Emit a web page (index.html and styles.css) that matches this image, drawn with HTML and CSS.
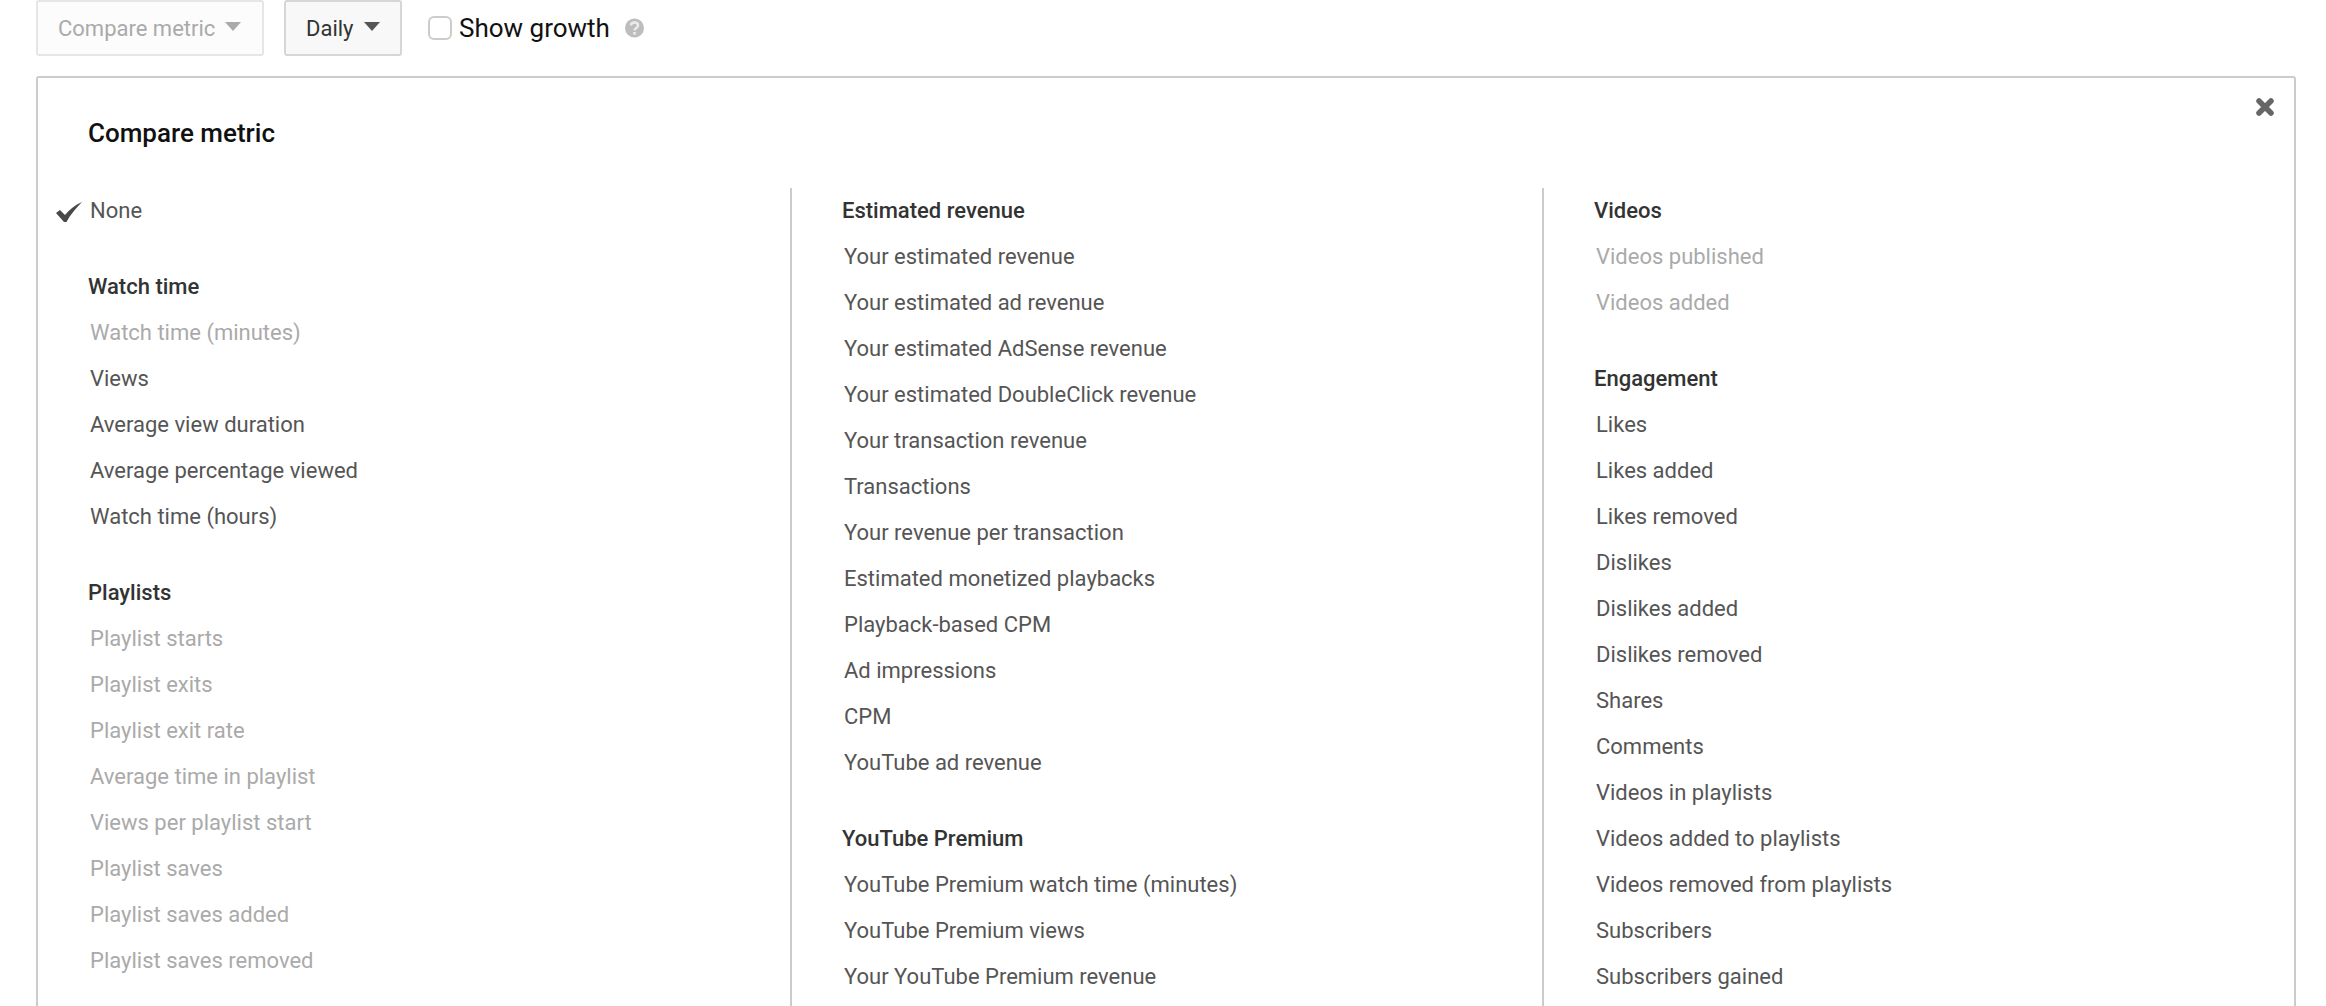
FILE: index.html
```html
<!DOCTYPE html>
<html lang="en">
<head>
<meta charset="utf-8">
<title>Compare metric</title>
<link rel="stylesheet" href="styles.css">
</head>
<body>
<div class="toolbar">
  <button class="btn btn-disabled">Compare metric<span class="caret"></span></button>
  <button class="btn btn-active">Daily<span class="caret"></span></button>
  <label class="growth"><span class="checkbox"></span><span>Show growth</span></label>
  <svg class="help" width="19" height="20" viewBox="0 0 19 20"><circle cx="9.500" cy="10" r="9.500" fill="#bdbdbd"/><path d="M6 7.500 C6 3.500 13 3.500 13 7.500 C13 10 9.500 9.800 9.500 12.500" fill="none" stroke="#ececec" stroke-width="2.400"/><rect x="8.200" y="14" width="2.600" height="2.600" fill="#ececec"/></svg>
</div>
<section class="panel">
  <svg class="close" width="18" height="18" viewBox="0 0 18 18"><path d="M3 3 L15 15 M15 3 L3 15" stroke="#666" stroke-width="5.500" stroke-linecap="round"/></svg>
  <h2 class="title">Compare metric</h2>
  <div class="cols">
    <div class="col">
      <div class="group">
        <div class="item"><svg class="check" width="26" height="20" viewBox="0 0 26 20"><path d="M0 11 L4 8 L9 13 C13 8 19 3 26 0 C20 6 14 13 10.500 20 L8 20 Z" fill="#484848"/></svg>None</div>
      </div>
      <div class="group">
        <h3>Watch time</h3>
        <div class="item off">Watch time (minutes)</div>
        <div class="item">Views</div>
        <div class="item">Average view duration</div>
        <div class="item">Average percentage viewed</div>
        <div class="item">Watch time (hours)</div>
      </div>
      <div class="group">
        <h3>Playlists</h3>
        <div class="item off">Playlist starts</div>
        <div class="item off">Playlist exits</div>
        <div class="item off">Playlist exit rate</div>
        <div class="item off">Average time in playlist</div>
        <div class="item off">Views per playlist start</div>
        <div class="item off">Playlist saves</div>
        <div class="item off">Playlist saves added</div>
        <div class="item off">Playlist saves removed</div>
      </div>
    </div>
    <div class="col">
      <div class="group">
        <h3>Estimated revenue</h3>
        <div class="item">Your estimated revenue</div>
        <div class="item">Your estimated ad revenue</div>
        <div class="item">Your estimated AdSense revenue</div>
        <div class="item">Your estimated DoubleClick revenue</div>
        <div class="item">Your transaction revenue</div>
        <div class="item">Transactions</div>
        <div class="item">Your revenue per transaction</div>
        <div class="item">Estimated monetized playbacks</div>
        <div class="item">Playback-based CPM</div>
        <div class="item">Ad impressions</div>
        <div class="item">CPM</div>
        <div class="item">YouTube ad revenue</div>
      </div>
      <div class="group">
        <h3>YouTube Premium</h3>
        <div class="item">YouTube Premium watch time (minutes)</div>
        <div class="item">YouTube Premium views</div>
        <div class="item">Your YouTube Premium revenue</div>
      </div>
    </div>
    <div class="col">
      <div class="group">
        <h3>Videos</h3>
        <div class="item off">Videos published</div>
        <div class="item off">Videos added</div>
      </div>
      <div class="group">
        <h3>Engagement</h3>
        <div class="item">Likes</div>
        <div class="item">Likes added</div>
        <div class="item">Likes removed</div>
        <div class="item">Dislikes</div>
        <div class="item">Dislikes added</div>
        <div class="item">Dislikes removed</div>
        <div class="item">Shares</div>
        <div class="item">Comments</div>
        <div class="item">Videos in playlists</div>
        <div class="item">Videos added to playlists</div>
        <div class="item">Videos removed from playlists</div>
        <div class="item">Subscribers</div>
        <div class="item">Subscribers gained</div>
      </div>
    </div>
  </div>
</section>
</body>
</html>
```

FILE: styles.css
```css
* { box-sizing: border-box; }
html, body { margin: 0; height: 1006px; overflow: hidden; background: #fff; }
body { padding: 0 30px 0 36px; font-family: Roboto, "Liberation Sans", sans-serif; font-size: 22px; color: #555; }

.toolbar { display: flex; align-items: center; height: 56px; margin-bottom: 20px; }
.btn { display: flex; align-items: center; flex: none; height: 56px; padding: 0 0 0 20px; border: 2px solid #d6d6d6; border-radius: 3px; background: #f8f8f8; font: inherit; color: #333; white-space: nowrap; }
.btn-disabled { width: 228px; margin-right: 20px; background: #fcfcfc; border-color: #e6e6e6; color: #aaa; }
.btn-active { width: 118px; margin-right: 26px; }
.caret { width: 0; height: 0; margin-left: 10px; margin-top: -4px; border-left: 8px solid transparent; border-right: 8px solid transparent; border-top: 9px solid currentColor; }
.btn-active .caret { color: #555; }
.growth { display: flex; align-items: center; color: #111; font-size: 26px; }
.checkbox { width: 24px; height: 24px; margin-right: 7px; border: 2px solid #ccc; border-radius: 6px; background: #fff; }
.help { margin-left: 15px; filter: blur(0.4px); }

.panel { position: relative; height: 960px; padding-top: 39px; border: 2px solid #ccc; border-radius: 3px; }
.close { position: absolute; top: 20px; right: 20px; filter: blur(0.4px); }
.title { margin: 0 0 39px 50px; font-size: 26px; font-weight: 500; line-height: 32px; color: #111; }

.cols { display: grid; grid-template-columns: 752px 752px 1fr; }
.col { min-height: 900px; padding-left: 50px; }
.col + .col { border-left: 2px solid #ccc; }

.group { margin-bottom: 30px; }
.group h3 { margin: 0; font-size: 22px; font-weight: 500; line-height: 46px; color: #333; }
.item { position: relative; padding-left: 2px; line-height: 46px; }
.off { color: #aaa; }
.check { position: absolute; left: -32px; top: 14px; filter: blur(0.4px); }
```
